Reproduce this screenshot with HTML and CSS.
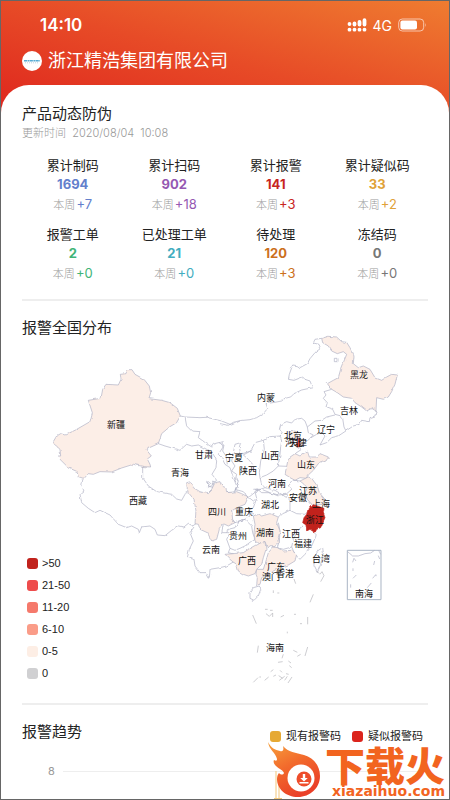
FILE: index.html
```html
<!DOCTYPE html>
<html lang="zh-CN">
<head>
<meta charset="utf-8">
<meta name="viewport" content="width=device-width, initial-scale=1">
<title>产品动态防伪</title>
<link rel="stylesheet" href="styles.css">
</head>
<body>
<div class="page">
  <header class="top">
    <div class="status">
      <span class="clock">14:10</span>
      <div class="indicators">
        <svg class="signal" viewBox="0 0 20 14" aria-hidden="true">
          <g fill="none" stroke="#fff" stroke-width="3.8" stroke-linecap="round">
            <path d="M2.500 6v.1M7.500 5.500v1M12.500 4v2.600M17.500 2.200v4.400M2.500 11.600v.1M7.500 11.600v.1M12.500 11.600v.1M17.500 11.600v.1"/>
          </g>
        </svg>
        <span class="network">4G</span>
        <svg class="battery" viewBox="0 0 30 14" aria-hidden="true">
          <rect x=".7" y="1" width="25" height="12" rx="3.6" fill="none" stroke="#fff" stroke-opacity=".6"/>
          <rect x="2.400" y="2.500" width="16.600" height="9" rx="2" fill="#fff"/>
          <path d="M27.300 5q1.500 2 0 4" fill="#fff" fill-opacity=".6"/>
        </svg>
      </div>
    </div>
    <div class="company">
      <svg class="avatar" viewBox="0 0 20 20" aria-hidden="true">
        <circle cx="10" cy="10" r="10" fill="#fff"/>
        <path d="M2 9.700h16" stroke="#58acd4" stroke-width="1.500" stroke-dasharray="3 .5 2 .4"/>
        <path d="M3 11.800h14" stroke="#a9bfd0" stroke-width=".7" stroke-dasharray="1 1"/>
      </svg>
      <h1>浙江精浩集团有限公司</h1>
    </div>
  </header>

  <main class="card">
    <section>
      <h2>产品动态防伪</h2>
      <p class="updated">更新时间&nbsp; 2020/08/04&nbsp; 10:08</p>
      <ul class="stats">
        <li class="blue"><span class="name">累计制码</span><strong>1694</strong><span class="week">本周 <b>+7</b></span></li>
        <li class="purple"><span class="name">累计扫码</span><strong>902</strong><span class="week">本周 <b>+18</b></span></li>
        <li class="red"><span class="name">累计报警</span><strong>141</strong><span class="week">本周 <b>+3</b></span></li>
        <li class="gold"><span class="name">累计疑似码</span><strong>33</strong><span class="week">本周 <b>+2</b></span></li>
        <li class="green"><span class="name">报警工单</span><strong>2</strong><span class="week">本周 <b>+0</b></span></li>
        <li class="cyan"><span class="name">已处理工单</span><strong>21</strong><span class="week">本周 <b>+0</b></span></li>
        <li class="orange"><span class="name">待处理</span><strong>120</strong><span class="week">本周 <b>+3</b></span></li>
        <li class="gray"><span class="name">冻结码</span><strong>0</strong><span class="week">本周 <b>+0</b></span></li>
      </ul>
    </section>

    <section>
      <h2>报警全国分布</h2>
      <figure class="map">
        <svg viewBox="22 330 406 362" role="img" aria-label="报警全国分布">
          <defs>
            <filter id="coast" x="-5%" y="-5%" width="110%" height="110%" color-interpolation-filters="sRGB">
              <feTurbulence type="fractalNoise" baseFrequency=".2" numOctaves="1" seed="4"/>
              <feDisplacementMap in="SourceGraphic" scale="3" xChannelSelector="R" yChannelSelector="G"/>
            </filter>
          </defs>
          <g class="land" filter="url(#coast)">
            <g transform="translate(40 320) scale(.3333)">
              <path class="low" d="M262 146L276 146 285 160 312 175 328 195 332 215 327 233 365 238 390 245 412 262 421 285 410 305 390 317 365 338 355 368 318 385 334 405 322 414 330 430 332 438 312 437 280 430 245 441 215 453 180 452 160 460 145 458 130 475 115 470 112 452 85 440 60 415 53 405 62 405 60 385 38 365 50 345 62 338 75 342 105 328 150 302 157 275 145 238 183 232 188 205 198 190 235 192 243 175 241 160 258 158Z"/>
              <path d="M421 285L435 288 480 290 500 289 545 300 575 312 600 300M435 288L440 315 455 330 480 332 475 350 500 368 515 378 520 370 550 362 548 380 535 400 545 410 555 430 570 440 580 470 592 500 580 515 548 514M355 368L375 375 420 388 440 370 455 375 475 372 500 385 520 400 530 420 528 440 516 460 530 478 515 490 500 478 505 495 520 500"/>
            </g>
            <g transform="translate(60 460) scale(.3333)">
              <path d="M68 57L65 75 72 90 60 100 65 125 85 142 105 155 120 148 150 162 175 190 200 200 215 195 235 205 238 215 245 198 270 195 285 205 292 222 315 224 335 208 355 195 372 198 385 187 398 195 408 188M248 12L248 50 265 75 290 92 335 100 350 114 365 118 375 100 382 85"/>
            </g>
            <g transform="translate(220 320) scale(.3333)">
              <path d="M0 308L25 313 40 304 60 299 90 296 110 290 130 278 143 262 138 248 165 244 185 240 195 232 212 228 222 218 245 207 278 200 270 180 255 175 248 168 222 178 205 175 208 160 218 132 232 134 240 140 262 128 270 113 285 95 302 82 297 70 280 66 285 55 305 52"/>
              <path class="low" d="M305 52L325 46 350 48 365 62 380 64 390 80 402 105 400 128 415 140 430 135 450 145 465 170 485 178 500 168 515 160 532 162 525 190 515 212 505 228 490 235 470 230 468 270 455 262 440 270 425 258 405 245 395 232 370 228 352 215 335 205 322 188 340 178 355 170 362 145 372 120 380 100 370 92 352 98 335 90 325 75 308 65Z"/>
              <path d="M343 112h11v10h-11zM335 205L312 212 318 222 310 232 322 245 318 258 338 265 345 280 360 284 368 292 372 318 378 330M468 270L465 285 450 290 448 302 425 298 418 310 400 315 385 325 355 345 335 350 320 365 300 372 315 345 305 335 290 340 270 352 262 360 240 375 245 385 225 398M345 282L320 288 305 298 285 300 262 318 265 335 280 342 270 352M262 318L255 300 245 292 225 295 215 306 200 302 182 310 178 325 190 335 180 345 185 360 182 380 180 400 175 435 200 436M182 345L150 347 130 358 133 385 122 420 118 455 120 470 140 462 160 450 175 435M130 358L105 365 92 390 70 402 85 415 98 430M92 390L62 400 58 378 62 365 45 370 40 395 35 420 45 435 35 450 50 460 45 480 55 490 45 505 70 512 85 530 110 510 135 500 125 490 120 470M135 500L165 508 185 520 200 530M0 365L12 372 8 390 18 405 22 430"/>
              <path class="low" d="M210 332L226 330 232 345 222 358 208 350Z"/>
              <path class="mid" d="M232 345L240 352 243 372 236 382 227 376 230 360Z"/>
              <path class="low" d="M200 436L205 412 225 398 240 405 262 390 268 408 290 408 300 398 325 408 318 420 295 428 280 448 265 462 258 472 240 470 225 478 210 470 195 460Z"/>
            </g>
            <g transform="translate(120 460) scale(.3333)">
              <path class="low" d="M202 85L200 65 212 62 220 80 240 92 262 98 275 85 285 65 300 62 305 75 318 80 320 95 350 92 365 98 385 108 375 130 350 140 335 150 338 175 345 185 325 195 310 188 298 205 290 235 275 240 262 215 240 205 235 190 225 188 228 150 222 115 205 95Z"/>
              <path d="M258 62L268 70 262 80 280 72 278 60 290 66M345 90L355 60 350 50M385 108L400 120 410 112 405 92 412 84 400 85M222 198L210 215 220 240 208 265 202 290 222 295 225 315 240 335 258 335 268 352 270 325 300 320 320 315 345 300 335 290 345 280 325 275 330 262 320 235 330 215 305 215 310 190M320 215L325 205 345 200 355 180 375 175 385 185 395 195 398 215 405 235 385 250 360 262 345 268 330 262M410 112L400 140 385 150 390 165 375 175 345 185 335 175M385 150L400 160M412 84L425 95 450 95 475 105"/>
            </g>
            <g transform="translate(230 420) scale(.3333)">
              <path class="low" d="M210 180L235 168 245 172 262 195 268 215 285 235 280 250 262 252 245 250 232 235 225 215 232 200 222 190Z"/>
              <path d="M210 180L190 178 175 195 185 205 168 220 180 240 180 268 155 278 145 288M180 268L200 278 225 280 245 262M168 220L145 222 120 215 95 205 75 205M145 305L150 330 148 360 142 380 160 385 185 378 190 355 200 335 218 312M185 378L195 400 210 415 225 400 245 375 258 345 258 335M278 380L280 395 272 430 262 455 252 435 252 410 265 388ZM60 515L70 500 88 495 92 505 85 525 72 538 60 532Z"/>
              <path class="low" d="M70 285L85 278 95 285 120 278 145 288 140 305 150 330 145 350 148 365 132 378 125 372 112 380 105 362 85 368 75 360 72 335 75 310Z"/>
              <path class="low" d="M-15 400L10 398 40 395 60 382 85 368 105 362 108 385 100 410 95 430 80 445 75 458 55 465 40 460 25 450 20 430 5 420Z"/>
              <path class="low" d="M115 395L130 378 142 380 160 390 185 388 200 400 195 420 175 432 150 440 130 450 110 460 95 470 90 490 80 492 82 470 78 460 80 445 100 445 108 420Z"/>
              <path class="high" d="M245 250L262 255 282 262 280 275 285 290 278 305 272 320 260 325 255 335 240 325 230 330 228 312 218 305 222 290 230 280 235 262Z"/>
            </g>
          </g>
          <g class="isles" transform="translate(220 570) scale(.3333)">
            <path d="M290 0l8 8M300 10l6-8 6 12-10 18M280 70l-10 24M160 58v8M172 66h6M222 24l5 14M98 132l11 26M135 115h8M138 128l10 8 10-10v12M150 118h8M182 138l10-5M222 130h6M240 158h6M263 138v22M202 182v5M115 224l-3 21M263 228l-8 27M220 238l12 6M232 256l10-6M190 250l-4 12M174 274l14-2M205 270l8 6M208 284l7 6M100 334l14-14M118 318h5M134 328l12-10M152 302l8-6M160 316l8-4M180 298l6 6M176 314l12 8M178 328l16-12M194 328l8-12M204 336l12-18M198 308l8 2"/>
          </g>
          <g class="inset" transform="translate(230 420) scale(.3333)">
            <rect x="352" y="388" width="101" height="148"/>
            <path d="M353 392L368 405 385 405 405 398 422 396 434 388M446 388L452 400M445 404l4 10M368 424l4-12 6 8M434 420l-3 12M369 442v8M369 472l10-10M428 472l10-12M436 464h4M362 490v10M412 500l12-14"/>
          </g>
          <g class="labels">
            <text x="116" y="427">新疆</text><text x="266" y="400">内蒙</text><text x="359" y="377">黑龙</text>
            <text x="349" y="413">吉林</text><text x="326" y="432">辽宁</text><text x="293" y="438">北京</text>
            <text x="294" y="445">河北</text><text x="298" y="445">天津</text><text x="204" y="457">甘肃</text>
            <text x="234" y="460">宁夏</text><text x="270" y="458">山西</text><text x="306" y="467">山东</text>
            <text x="180" y="475">青海</text><text x="248" y="473">陕西</text><text x="277" y="486">河南</text>
            <text x="308" y="493">江苏</text><text x="138" y="503">西藏</text><text x="298" y="500">安徽</text>
            <text x="321" y="506">上海</text><text x="270" y="507">湖北</text><text x="217" y="514">四川</text>
            <text x="244" y="514">重庆</text><text x="315" y="522">浙江</text><text x="238" y="538">贵州</text>
            <text x="265" y="535">湖南</text><text x="291" y="536">江西</text><text x="303" y="546">福建</text>
            <text x="211" y="552">云南</text><text x="247" y="563">广西</text><text x="276" y="569">广东</text>
            <text x="321" y="561">台湾</text><text x="285" y="576">香港</text><text x="271" y="579">澳门</text>
            <text x="364" y="596">南海</text><text x="275" y="650">海南</text>
          </g>
        </svg>
        <ul class="scale">
          <li class="s50">&gt;50</li>
          <li class="s21">21-50</li>
          <li class="s11">11-20</li>
          <li class="s6">6-10</li>
          <li class="s1">0-5</li>
          <li class="s0">0</li>
        </ul>
      </figure>
    </section>

    <section class="trend">
      <div class="trend-head">
        <h2>报警趋势</h2>
        <ul class="series">
          <li class="now">现有报警码</li>
          <li class="suspect">疑似报警码</li>
        </ul>
      </div>
      <div class="axis"><span>8</span><i></i></div>
    </section>
  </main>

  <div class="watermark">
    <svg class="flame" viewBox="0 0 56 58" aria-hidden="true">
      <defs>
        <linearGradient id="fire" x1="0" y1="0" x2=".5" y2="1">
          <stop offset="0" stop-color="#f7a13c"/>
          <stop offset=".5" stop-color="#f26a2c"/>
          <stop offset="1" stop-color="#ea4028"/>
        </linearGradient>
      </defs>
      <path d="M10 30v27M13 34v23M8 57.500h8" stroke="#f3c77a" stroke-width="1"/>
      <path fill="url(#fire)" d="M2 1C5 7 9 9 14 10 17 11 18 9 17 5 22 11 30 12 38 14 48 17 54 25 54 35 54 47 44 56 32 56 20 56 11 48 11 38 11 35 12 33 13 32 15 34 17 34 18 32 17 29 13 28 10 25 8 23 7 21 8 19 10 20 11 20 11 18 10 12 3 9 2 1Z"/>
      <circle cx="35" cy="37" r="13.500" fill="#fff"/>
      <circle cx="38" cy="38" r="7.500" fill="#ee4d2b"/>
      <path d="M36.800 33h2.400v4h2.600l-3.800 3.600-3.800-3.600h2.600zM33.500 41h9v1.500h-9z" fill="#fff"/>
    </svg>
    <div class="brand"><span class="brand-name">下载火</span><span class="brand-url">xiazaihuo.com</span></div>
  </div>
</div>
</body>
</html>
```
FILE: styles.css
```css
* { box-sizing: border-box; }

body {
  margin: 0;
  color: #222;
  font-family: Inter, "Noto Sans CJK SC", sans-serif;
}

h1, h2, p, ul, figure { margin: 0; padding: 0; }
ul { list-style: none; }
svg { display: block; }

.page {
  position: relative;
  display: flex;
  flex-direction: column;
  min-height: 100vh;
  border: 1px solid #666;
  background: linear-gradient(to top right, #df271e 5%, #e74b27 50%, #ef7c30) top / 100% 120px no-repeat #fff;
}

.top { padding: 13px 21px 9px; color: #fff; }

.status {
  display: flex;
  justify-content: space-between;
  align-items: center;
  height: 22px;
  padding: 0 0 0 18px;
}
.clock { font-size: 17px; font-weight: 600; }
.indicators { display: flex; align-items: center; gap: 6px; }
.network { font-size: 14px; }
.signal { width: 20px; height: 14px; }
.battery { width: 30px; height: 14px; }

.company { display: flex; align-items: center; gap: 6px; height: 30px; margin-top: 10px; }
.avatar { width: 20px; height: 20px; }
h1 { font-size: 18px; line-height: 30px; font-weight: 400; }

.card {
  flex: 1;
  padding: 18px 21px 16px;
  border-radius: 28px 28px 0 0;
  background: #fff;
}
h2 { font-size: 15px; line-height: 22px; font-weight: 400; }
section + section { border-top: 2px solid #eee; padding-top: 16px; }

.updated { color: #999; font-size: 11px; line-height: 16px; font-weight: 300; }

.stats {
  display: grid;
  grid-template-columns: repeat(4, 1fr);
  row-gap: 8px;
  margin: 14px 0;
}
.stats li { display: flex; flex-direction: column; align-items: center; }
.name { color: #222; font-size: 13px; line-height: 20px; }
strong { font-size: 13px; line-height: 18px; font-weight: 700; }
.week { color: #999; font-size: 11px; line-height: 22px; font-weight: 300; }
.week b { margin-left: -2px; font-size: 13px; font-weight: 400; }
.blue strong, .blue b { color: #6380cc; }
.purple strong, .purple b { color: #9659b2; }
.red strong, .red b { color: #c8251f; }
.gold strong, .gold b { color: #e0a238; }
.green strong, .green b { color: #41b478; }
.cyan strong, .cyan b { color: #42adc0; }
.orange strong, .orange b { color: #cc701c; }
.gray strong, .gray b { color: #777; }

.map { display: grid; margin: -8px 0 10px; }
.map > * { grid-area: 1 / 1; }
.map svg { width: 100%; height: auto; }
.land, .isles, .inset { fill: none; stroke: #adafc2; stroke-width: 2; stroke-linejoin: round; }
.land .low { fill: #fceee7; }
.land .mid { fill: #ef4a3b; }
.land .high { fill: #c1221c; stroke: #c1221c; }
.isles { stroke: #b4b4ba; }
.inset rect { stroke: #a9b5c4; stroke-width: 3; }
.labels { fill: #111; font-size: 9px; text-anchor: middle; }

.scale {
  align-self: end;
  display: grid;
  gap: 10px;
  padding: 0 0 14px 5px;
  font: 11px/12px "Liberation Sans", sans-serif;
}
.scale li, .series li { display: flex; align-items: center; gap: 4px; }
.scale li::before, .series li::before {
  content: "";
  width: 11px;
  height: 11px;
  border-radius: 3px;
  background: var(--swatch);
}
.s50 { --swatch: #c1221c; }
.s21 { --swatch: #ee4c4c; }
.s11 { --swatch: #f5796b; }
.s6 { --swatch: #fa9c88; }
.s1 { --swatch: #fdeee5; }
.s0 { --swatch: #d0d0d2; }

.trend-head { display: flex; justify-content: space-between; align-items: center; }
.series { display: flex; gap: 11px; padding: 8px 5px 0 0; font-size: 11px; line-height: 14px; }
.series li { gap: 5px; }
.now { --swatch: #e6a934; }
.suspect { --swatch: #db241c; }

.axis { display: flex; align-items: center; gap: 8px; margin-top: 18px; padding-left: 26px; color: #999; font-size: 11px; line-height: 20px; }
.axis i { flex: 1; height: 1px; background: #eee; }

.watermark {
  position: absolute;
  right: 4px;
  bottom: 0;
  display: flex;
  align-items: flex-end;
  gap: 3px;
  color: #f2641f;
}
.flame { width: 56px; height: 58px; }
.brand { display: flex; flex-direction: column; align-items: flex-end; }
.brand-name { font: 900 40px/38px "Noto Sans CJK SC", sans-serif; }
.brand-url { font: 700 14px/16px "DejaVu Sans", sans-serif; }
```
